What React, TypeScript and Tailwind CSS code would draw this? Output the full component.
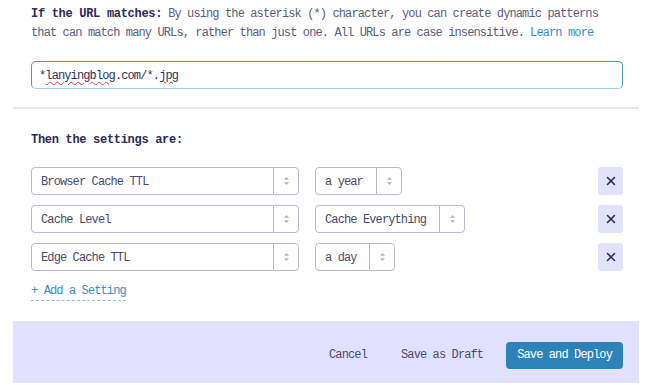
import { X } from "lucide-react";

const mono = "font-['Liberation_Mono','DejaVu_Sans_Mono',monospace]";

function Caret() {
    return (
        <svg width="7" height="10" viewBox="0 0 7 10" className="text-[#b3b1c6]">
            <path d="M3.5 1 L6 3.8 H1 Z" fill="currentColor" />
            <path d="M3.5 9 L6 6.2 H1 Z" fill="currentColor" />
        </svg>
    );
}

type SelectProps = { label: string; width: string };

function Select({ label, width }: SelectProps) {
    return (
        <div className={`flex h-[28px] items-stretch rounded-[4px] border border-[#bcb8d2] bg-white ${width}`}>
            <div className="flex flex-1 items-center pl-[9px] pt-[1px] text-[#4a4a70]">{label}</div>
            <div className="flex w-[25px] items-center justify-center border-l border-[#bcb8d2]">
                <Caret />
            </div>
        </div>
    );
}

const rows = [
    { left: "Browser Cache TTL", right: "a year", rw: "w-[87px]" },
    { left: "Cache Level", right: "Cache Everything", rw: "w-[150px]" },
    { left: "Edge Cache TTL", right: "a day", rw: "w-[80px]" },
];

export default function App() {
    return (
        <div className={`h-[385px] w-[649px] bg-white text-[12px] tracking-[-0.88px] ${mono}`}>
            <div className="ml-[13px] mr-[10px]">
                <div className="pl-[18px] pr-[16px] pt-[5px]">
                    <div className="flex flex-col leading-[19px] text-[#5c5c80]">
                        <div className="flex gap-[6px]">
                            <b className="tracking-[-0.3px] text-[#2c2c58]">If the URL matches:</b>
                            <span>By using the asterisk (*) character, you can create dynamic patterns</span>
                        </div>
                        <div className="flex gap-[6px]">
                            <span>that can match many URLs, rather than just one. All URLs are case insensitive.</span>
                            <span className="text-[#3b8dc2]">Learn more</span>
                        </div>
                    </div>
                    <div className="mt-[18px] flex h-[28px] items-center rounded-[5px] border border-[#4f97c7] border-b-[#a9cde3] pl-[7px] pt-[1px] text-[#33335a]">
                        <span>*</span>
                        <span className="underline decoration-wavy decoration-[#e04040] decoration-1 underline-offset-2">lanyingblog</span>
                        <span>.com/*.</span>
                        <span className="underline decoration-wavy decoration-[#e04040] decoration-1 underline-offset-2">jpg</span>
                    </div>
                </div>
                <div className="mt-[18px] h-[2px] bg-[#e4e4fb]" />
                <div className="pl-[18px] pr-[16px]">
                    <h3 className="mt-[22px] font-bold leading-[19px] tracking-[-0.3px] text-[#2c2c58]">Then the settings are:</h3>
                    <div className="mt-[17px] flex flex-col gap-[10px]">
                        {rows.map((r) => (
                            <div key={r.left} className="flex items-center">
                                <Select label={r.left} width="w-[268px]" />
                                <div className="ml-[16px]">
                                    <Select label={r.right} width={r.rw} />
                                </div>
                                <button className="ml-auto flex h-[28px] w-[25px] items-center justify-center rounded-[3px] bg-[#e2e2fc] text-[#2a2a58]">
                                    <X size={14} strokeWidth={2.6} />
                                </button>
                            </div>
                        ))}
                    </div>
                    <div className="mt-[10px]">
                        <span className="inline-block border-b border-dashed border-[#8fc0e0] pt-[1px] leading-[18px] text-[#3b8dc2]">+ Add a Setting</span>
                    </div>
                </div>
                <div className="mt-[20px] flex h-[62px] items-start justify-end bg-[#e1e1fd] pr-[16px] pt-[20px]">
                    <div className="flex h-[27px] items-center pt-[1px] text-[#4a4a70]">
                        <span>Cancel</span>
                        <span className="ml-[34px]">Save as Draft</span>
                        <button className="ml-[23px] h-[27px] rounded-[4px] bg-[#2d82b9] px-[11px] text-white">Save and Deploy</button>
                    </div>
                </div>
            </div>
        </div>
    );
}
